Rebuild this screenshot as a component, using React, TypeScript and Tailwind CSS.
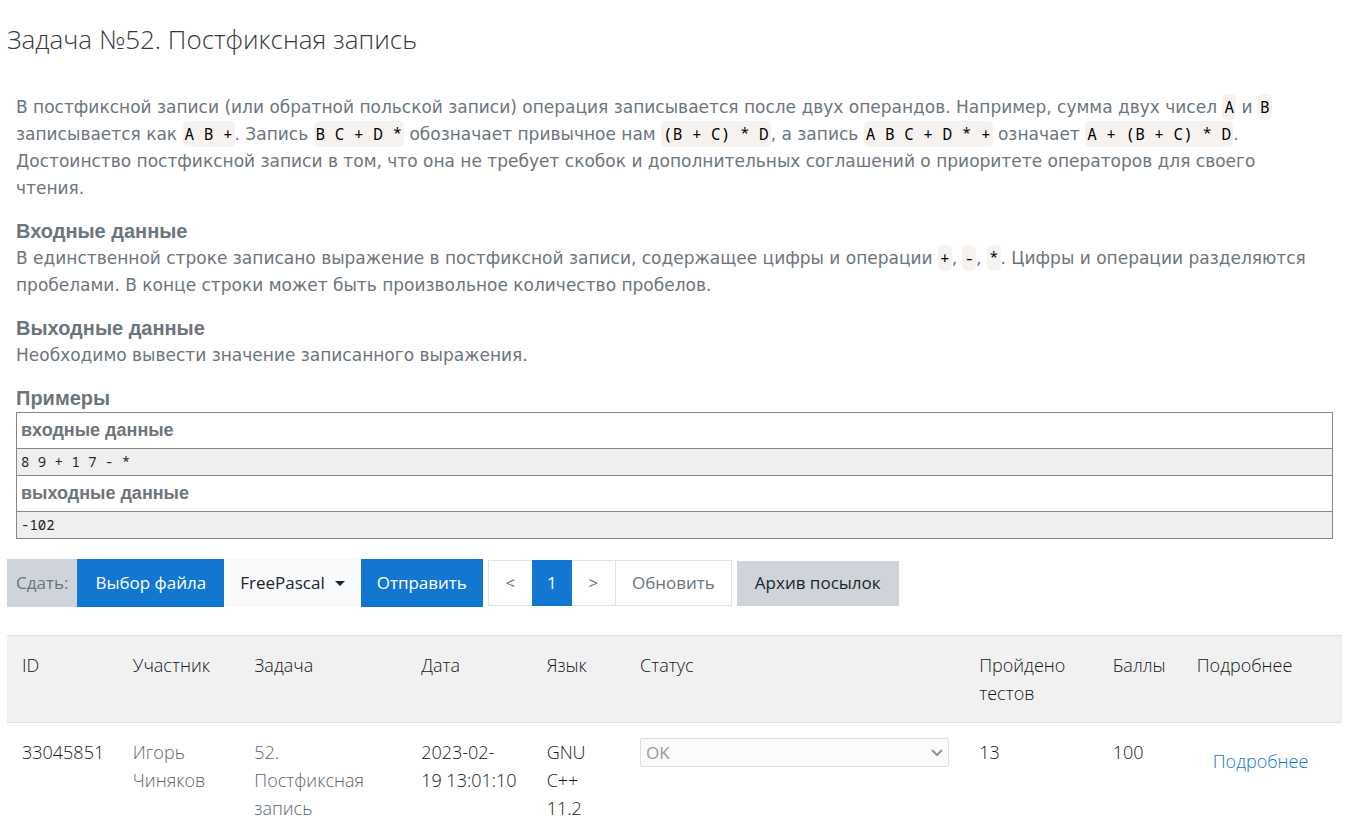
import type { ReactNode } from "react";

function Code({ children }: { children: ReactNode }) {
  return (
    <code className="rounded-[5px] bg-[#f6f2f0] px-[2px] py-[2px] font-['Noto_Sans_Mono','DejaVu_Sans_Mono',monospace] text-[16px] text-black">
      {children}
    </code>
  );
}

function SectionTitle({ children }: { children: ReactNode }) {
  return (
    <h2 className="font-['Liberation_Sans',sans-serif] text-[20px] leading-[27px] font-bold">{children}</h2>
  );
}

const samples = [
  { title: "входные данные", value: "8 9 + 1 7 - *" },
  { title: "выходные данные", value: "-102" },
];

function Samples() {
  return (
    <table className="w-full border-collapse border border-[#888888] text-left">
      <tbody>
        {samples.map((s) => [
          <tr key={s.title}>
            <th className="h-9 border border-[#888888] px-1 py-0 font-['Liberation_Sans',sans-serif] text-[18px] leading-[27px] font-bold">
              {s.title}
            </th>
          </tr>,
          <tr key={s.value}>
            <td className="h-[27px] border border-[#888888] bg-[#efefef] px-1 py-0">
              <pre className="font-['Noto_Sans_Mono','DejaVu_Sans_Mono',monospace] text-[14px] leading-5 text-[#212529]">{s.value}</pre>
            </td>
          </tr>,
        ])}
      </tbody>
    </table>
  );
}

function Toolbar() {
  return (
    <div className="flex items-center text-[17px] leading-7 font-normal">
      <span className="flex h-12 items-center bg-[#ced4da] px-[9px] text-[#6c757d]">Сдать:</span>
      <button type="button" className="h-12 bg-[#1177d1] px-[18px] text-white">Выбор файла</button>
      <button type="button" className="flex h-12 items-center gap-[10px] bg-[#f8f9fa] px-4 text-[#212529]">
        FreePascal
        <span className="border-x-[5px] border-t-[5px] border-x-transparent border-t-[#212529]" />
      </button>
      <button type="button" className="h-12 bg-[#1177d1] px-4 text-white">Отправить</button>
      <nav className="ml-[5px] flex h-[46px] border border-[#dee2e6] text-[#6c757d]" aria-label="Страницы">
        <button type="button" className="w-[43px]">&lt;</button>
        <button type="button" className="-my-px w-10 bg-[#1177d1] text-white">1</button>
        <button type="button" className="w-11 border-r border-[#dee2e6]">&gt;</button>
        <button type="button" className="px-4">Обновить</button>
      </nav>
      <a href="#archive" className="ml-[5px] flex h-[45px] items-center bg-[#ced4da] px-[18px] text-[#212529]">
        Архив посылок
      </a>
    </div>
  );
}

const columns = [
  { title: "ID", width: "w-[8.3%]" },
  { title: "Участник", width: "w-[9.1%]" },
  { title: "Задача", width: "w-[12.5%]" },
  { title: "Дата", width: "w-[9.4%]" },
  { title: "Язык", width: "w-[7%]" },
  { title: "Статус", width: "w-[25.4%]" },
  { title: "Пройдено тестов", width: "w-[10%]" },
  { title: "Баллы", width: "w-[6.3%]" },
  { title: "Подробнее", width: "w-[12%]" },
];

function Submissions() {
  return (
    <table className="mt-7 w-full table-fixed border-collapse text-left text-[18px] leading-7 text-[#15181a]">
      <thead>
        <tr className="border-y border-[#dee2e6] bg-[#f1f1f1]">
          {columns.map((c) => (
            <th key={c.title} className={`${c.width} py-[15px] pl-[15px] pr-3 align-top font-light`}>
              {c.title}
            </th>
          ))}
        </tr>
      </thead>
      <tbody>
        <tr className="align-top">
          <td className="py-[15px] pl-[15px]">33045851</td>
          <td className="py-[15px] pl-[15px] text-[#5c656d]">Игорь<br />Чиняков</td>
          <td className="py-[15px] pl-[15px] text-[#5c656d]">52.<br />Постфиксная запись</td>
          <td className="py-[15px] pl-[15px]">2023-02-<br />19 13:01:10</td>
          <td className="py-[15px] pl-[15px]">GNU<br />C++<br />11.2</td>
          <td className="px-[15px] py-[15px]">
            <div className="relative">
              <select
                disabled
                aria-label="Статус"
                className="block h-[29px] w-full appearance-none rounded-[2px] border border-[#dfdfdf] bg-[#fbfbfb] px-[5px] text-[17px] leading-[26px] font-normal text-[#9a9a9a] opacity-100"
              >
                <option>OK</option>
              </select>
              <svg viewBox="0 0 12 8" fill="none" stroke="#949494" strokeWidth="2" className="pointer-events-none absolute top-[11px] right-[6px] h-2 w-3">
                <path d="M1 1L6 6L11 1" />
              </svg>
            </div>
          </td>
          <td className="py-[15px] pl-[15px]">13</td>
          <td className="py-[15px] pl-[15px]">100</td>
          <td className="py-6 pl-[31px]">
            <a href="#details" className="text-[#1177d1]">Подробнее</a>
          </td>
        </tr>
      </tbody>
    </table>
  );
}

export default function App() {
  return (
    <main className="h-screen overflow-hidden bg-white pt-[23px] pr-[15px] pl-[7px] font-['Open_Sans','Noto_Sans',sans-serif] font-light">
      <h1 className="text-[26px] leading-8 text-[#373a3c]">Задача №52. Постфиксная запись</h1>
      <article className="mt-[39px] mb-5 pr-[9px] pl-[9px] font-['DejaVu_Sans',sans-serif] text-[17px] leading-[27px] font-normal text-[#6c757d]">
        <p className="mb-4">
          В постфиксной записи (или обратной польской записи) операция записывается после двух операндов. Например, сумма двух чисел{" "}
          <Code>A</Code> и <Code>B</Code> записывается как <Code>A B +</Code>. Запись <Code>B C + D *</Code> обозначает привычное нам{" "}
          <Code>(B + C) * D</Code>, а запись <Code>A B C + D * +</Code> означает <Code>A + (B + C) * D</Code>. Достоинство постфиксной
          записи в том, что она не требует скобок и дополнительных соглашений о приоритете операторов для своего
          <br />
          чтения.
        </p>
        <SectionTitle>Входные данные</SectionTitle>
        <p className="mb-4">
          В единственной строке записано выражение в постфиксной записи, содержащее цифры и операции <Code>+</Code>, <Code>-</Code>,{" "}
          <Code>*</Code>. Цифры и операции разделяются пробелами. В конце строки может быть произвольное количество пробелов.
        </p>
        <SectionTitle>Выходные данные</SectionTitle>
        <p className="mb-4">Необходимо вывести значение записанного выражения.</p>
        <SectionTitle>Примеры</SectionTitle>
        <Samples />
      </article>
      <Toolbar />
      <Submissions />
    </main>
  );
}
